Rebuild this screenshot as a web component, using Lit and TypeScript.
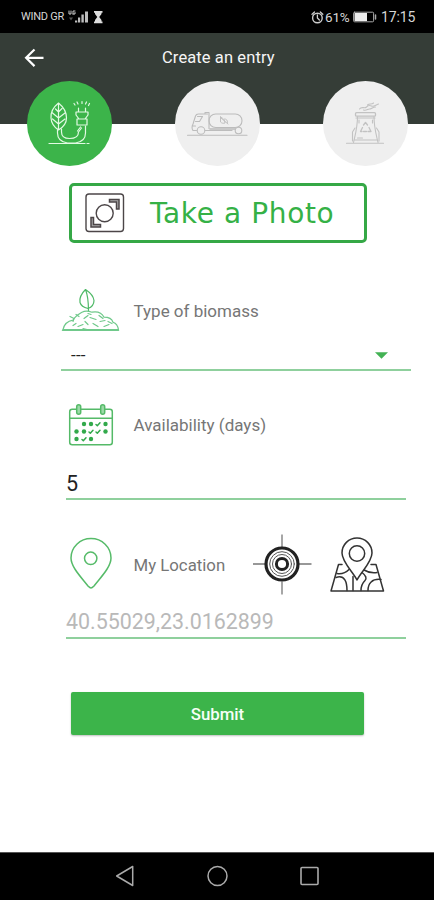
import { LitElement, html, css, svg } from "lit";
import { customElement } from "lit/decorators.js";

const dots = [
  [84, 424, 0], [91, 424, 0], [98, 424, 1], [105.5, 424, 0],
  [76.5, 431.5, 0], [84, 431.5, 0], [91, 431.5, 1], [98, 431.5, 1], [105.5, 431.5, 0],
  [76.5, 439, 0], [84, 439, 1], [91, 439, 0],
];

@customElement("app-root")
export class AppRoot extends LitElement {
  static styles = css`
    :host {
      display: flex;
      flex-direction: column;
      width: 434px;
      height: 900px;
      overflow: hidden;
      background: #fff;
      font-family: Roboto, sans-serif;
      --green: #3cb44a;
      --line: #8fd09d;
    }
    * { box-sizing: border-box; }
    svg { display: block; flex: none; fill: none; stroke-linecap: round; stroke-linejoin: round; }
    .status {
      height: 32.5px;
      flex: none;
      background: #000;
      color: #d6d6d6;
      display: flex;
      align-items: center;
      padding: 1px 19px 0 21px;
      font-size: 11px;
      letter-spacing: -0.25px;
    }
    .carrier { width: 45px; white-space: nowrap; }
    .spacer { flex: 1; }
    .battery-text { font-size: 13.5px; letter-spacing: -0.2px; width: 28px; }
    .clock { font-size: 14px; letter-spacing: -0.1px; width: 34px; margin-left: 4px; white-space: nowrap; }
    .bar {
      height: 91px;
      flex: none;
      background: #353d37;
      display: flex;
      align-items: flex-start;
      padding: 13.5px 0 0 23px;
      color: #f5f5f5;
    }
    .title {
      margin-left: 115px;
      line-height: 24px;
      font-size: 16.5px;
      white-space: nowrap;
      letter-spacing: 0.1px;
    }
    .steps {
      flex: none;
      display: flex;
      justify-content: space-between;
      margin-top: -42.5px;
      padding: 0 26px 0 26.5px;
    }
    .step {
      width: 85px;
      height: 85px;
      border-radius: 50%;
      background: #efefef;
      display: grid;
      place-items: center;
    }
    .step.active { background: var(--green); }
    .photo {
      flex: none;
      width: 298px;
      height: 60px;
      margin: 17px 0 0 69px;
      border: 3px solid #35a846;
      border-radius: 5px;
      display: flex;
      align-items: center;
      padding-left: 12.5px;
      font-family: "DejaVu Sans", Verdana, sans-serif;
      font-size: 28px;
      color: #35b146;
      background: #fff;
    }
    .photo-text { margin-left: 25.5px; white-space: nowrap; letter-spacing: 0.62px; line-height: 54px; padding-top: 2px; }
    .row { flex: none; display: flex; align-items: center; padding-left: 60px; }
    .type { height: 50px; margin-top: 43px; }
    .days { height: 50px; margin-top: 28.5px; }
    .place { height: 62px; margin-top: 33px; }
    .label { color: #767676; font-size: 17px; line-height: 24px; white-space: nowrap; margin-left: 13.5px; }
    .place .label { width: 113px; font-size: 16.8px; padding-top: 2px; }
    .map { margin-left: 5px; }
    .field { flex: none; border-bottom: 2px solid var(--line); display: flex; align-items: center; white-space: nowrap; }
    .select { margin: 0 0 0 61px; width: 350px; height: 35px; padding: 5px 23px 0 10px; justify-content: space-between; font-size: 17px; color: #222; }
    .dash { letter-spacing: 0.2px; }
    .number { margin: 0 0 0 66px; width: 340px; height: 50px; font-size: 21.5px; color: #222; padding-top: 20px; }
    .coords { margin: 0 0 0 66px; width: 340px; height: 44px; font-size: 21.4px; color: #b9b9b9; padding-top: 12px; }
    .submit {
      flex: none;
      width: 293px;
      height: 43.5px;
      margin: 53px 0 0 71px;
      border-radius: 2px;
      background: var(--green);
      color: #f6fff6;
      box-shadow: 0 1px 2px rgba(0, 0, 0, 0.25);
      display: grid;
      place-items: center;
      font-size: 16.8px;
      font-weight: 500;
      padding-top: 2px;
    }
    .nav {
      flex: none;
      margin-top: auto;
      height: 48.5px;
      background: #000;
      border-top: 1px solid #555;
      display: flex;
      align-items: center;
      justify-content: space-between;
      padding: 0 114px;
    }
  `;

  render() {
    return html`
      <div class="status">
        <span class="carrier">WIND GR</span>
        <svg width="38" height="16" viewBox="66 9 38 16">
          <path d="M69 11v3h2v-3M73 14v-3h2M73 14h2v-1.5" stroke="#ccc" stroke-width="1" />
          <path d="M69 17.5h4l-2 3z" fill="#555" />
          <path d="M75 22.5v-2h2.200v2zM78 22.500v-5h2.200v5zM81.400 22.500v-8h2.400v8zM85 22.500v-11h3v11z" fill="#bdbdbd" />
          <path d="M94 11.800h8.500M94 22.400h8.500" stroke="#ddd" stroke-width="1.700" stroke-linecap="butt" />
          <path d="M95 12h6.500v2l-2.300 3 2.300 3v2H95v-2l2.300-3L95 14z" fill="#ddd" />
        </svg>
        <span class="spacer"></span>
        <svg width="15" height="16" viewBox="309 8 15 16" stroke="#ccc">
          <circle cx="316.400" cy="17" r="4.800" stroke-width="1.400" />
          <path d="M311 13.200l2.500-2.200M321.800 13.200l-2.500-2.200M316.400 14v3l2 2" stroke-width="1.300" />
        </svg>
        <span class="battery-text">61%</span>
        <svg width="24" height="12" viewBox="354 11 24 12">
          <rect x="354.600" y="12.200" width="20" height="9.600" rx="1" stroke="#aaa" />
          <path d="M355.500 13h12.500v8h-12.500z" fill="#eee" />
          <path d="M376.500 15v4" stroke="#aaa" stroke-width="1.500" />
        </svg>
        <span class="clock">17:15</span>
      </div>

      <div class="bar">
        <svg width="24" height="24" viewBox="23 45 24 24">
          <path d="M43.500 56.800H26.500M34.500 48.500l-8.400 8.300 8.400 8.300" stroke="#fff" stroke-width="2.200" stroke-linecap="butt" stroke-linejoin="miter" />
        </svg>
        <span class="title">Create an entry</span>
      </div>

      <div class="steps">
        <div class="step active">
          <svg width="85" height="85" viewBox="26.500 81 85 85" stroke="#e2fae3" stroke-width="1.200">
            <path d="M58 103c-5 4-8 9-7.500 15 .3 5 3 9 7.500 12 5-3 8-7 8-12 0-6-3-11-8-15zM58 104v26M58 112l-3-3M58 112l3.500-3.500M58 118l-6-5M58 118l6.500-5M58 124l-6-5M58 124l6.500-5" />
            <path d="M57 130v3c0 5 3 9 10 10h8c7-1 10-5 10-10v-7M61 129v3c0 4 3 6.500 8 6.500 6 0 9-2.500 9-6.500l3-4" />
            <path d="M76.500 119h10v6h-10zM75.500 112h12v3l-3 4h-6l-3-4zM78 112v-4M85 112v-4M77 131l3-4" />
            <path d="M74.500 105l-1-1.500M77.500 104l-1-2M81.500 103.500v-2M85 104l1-2M88 105.500l1-2" />
            <path d="M48.500 143.500h36M86.500 143.500h2" />
          </svg>
        </div>
        <div class="step">
          <svg width="85" height="85" viewBox="175 81 85 85" stroke="#bcbcbc" stroke-width="1.100">
            <path d="M196.500 130.500h-3.500c-1-1-1.500-4 0-6.500l2.500-8c.5-1.500 1.500-2 3-2h9M200.500 130.500h31.500M205 114v-1.500h4v16M195.500 121.500h4l3-5h-5M192.500 126h3" />
            <rect x="209" y="114" width="33" height="13.500" rx="6.700" />
            <path d="M210 129h25" stroke-width="1.600" />
            <circle cx="201" cy="130.500" r="3.800" fill="#efefef" />
            <circle cx="238.500" cy="130.500" r="3.300" fill="#efefef" />
            <path d="M220.500 117v5c1.500 1.500 3 1.500 4.500 1 0-3-2-5-4.500-6zM221 118l7 6M224.500 119c2 0 3 1 3 3.500" stroke-width=".9" />
            <path d="M187.500 135.300h59.500" />
          </svg>
        </div>
        <div class="step">
          <svg width="85" height="85" viewBox="323.500 81 85 85" stroke="#c2c2c2" stroke-width="1.100">
            <rect x="356" y="112.700" width="20" height="3.500" rx="1" stroke-width="1.300" />
            <path d="M358 116.500c0 11-2 17-4 26M374.500 116.500c0 11 2 17 4 26M356.500 118h19M355.500 128l-2.500 4v9M377 128l2.500 4v9M355 140h23" />
            <path d="M362.500 131.500h-1.500l2-4M364 125l2-2.500 2 2.500M369.500 127.500l2 4h-3M367 131.500h-3" stroke-width="1.300" />
            <path d="M359.500 120v3M373 120v3M358 138h5" />
            <path d="M360 109c2-3 5 0 7-2s3-2 5-1 4-1 7-2M364 110c3 1 4-1 6-1s3-2 6-2M368 105c2-2 4 0 6-2" />
            <path d="M347 143.200h37" />
          </svg>
        </div>
      </div>

      <div class="photo">
        <svg width="40" height="40" viewBox="85 193 40 40" stroke="#4c4648">
          <rect x="86" y="194" width="37.500" height="37.500" rx="3" stroke-width="1.400" />
          <circle cx="104.700" cy="213.200" r="8.500" stroke-width="1.400" />
          <path d="M109.500 199.500h9.500v9.500h-2.500v-7h-7zM91 217.500v9.500h9.500v-2.500h-7v-7z" stroke-width="1.500" stroke-linejoin="miter" fill="#aaa" />
        </svg>
        <span class="photo-text">Take a Photo</span>
      </div>

      <div class="row type">
        <svg width="60" height="50" viewBox="60 285.500 60 50" stroke="#70c98b" stroke-width="1.200">
          <path d="M85.500 289c-4 4-6.500 8-5.500 13 1 3.500 4 5 8 6 4-1.500 6-4 6-8-.5-5-4-8-8.500-11zM85.500 289c2 5 3 10 3 21.500" stroke="#4fb967" />
          <path d="M63 329.200c1-5 4-8.500 10-9.500 2-4 5-5.500 9-8 4-2 7-1 10 0 6-1 10 1 12 5 5 0 8 2 9 5 3 1 5 4 5.500 7.500z" />
          <path d="M70 316l4 2-1 3M76 314l3 2M78 326l5-2M84 318l4-3M83 328l4 1M90 317l6 2M91 314l-3-1M93 323l5 3M99 315l4 3M100 321l5-1M104 326l5-2M88 324l-3-3M108 321l4 2M73 325l3-2" />
          <path d="M62.500 329.700h56" stroke-width="1.500" />
        </svg>
        <span class="label">Type of biomass</span>
      </div>
      <div class="field select">
        <span class="dash">---</span>
        <svg width="13" height="7" viewBox="0 0 13 7"><path d="M0 .3h13L6.500 6.800z" fill="#43b254" /></svg>
      </div>

      <div class="row days">
        <svg width="60" height="50" viewBox="60 400 60 50" stroke="#55ba68" stroke-width="1.500">
          <rect x="69.700" y="409.300" width="42.600" height="35.500" rx="2.500" />
          <path d="M70 418.200h42" />
          <rect x="76.700" y="404.700" width="4" height="9.500" rx="2" fill="#9cdaa8" />
          <rect x="100.700" y="404.700" width="4" height="9.500" rx="2" fill="#9cdaa8" />
          ${dots.map(([x, y, check]) =>
            check
              ? svg`<path d="M${x - 2} ${y + 0.5}l1.300 1.200 2.700-3" stroke="#32a94b" />`
              : svg`<circle cx=${x} cy=${y} r="2.200" fill="#32a94b" stroke="none" />`
          )}
        </svg>
        <span class="label">Availability (days)</span>
      </div>
      <div class="field number">5</div>

      <div class="row place">
        <svg width="60" height="62" viewBox="60 533 60 62" stroke="#56bb69" stroke-width="1.500">
          <path d="M91 588c-1.500 0-2-1-3-2-7-9-17-19-17-28a20 19.500 0 0 1 40 0c0 9-10 19-17 28-1 1-1.500 2-3 2z" />
          <circle cx="90.700" cy="558.300" r="6.200" />
        </svg>
        <span class="label">My Location</span>
        <svg width="70" height="62" viewBox="247 532.500 70 62" stroke="#222">
          <path d="M253 563.500h12M299 563.500h12.500M282 534v13M282 581v13" stroke="#777" stroke-width="1.300" stroke-linecap="butt" />
          <circle cx="282" cy="563.500" r="16" stroke-width="3.200" />
          <circle cx="282" cy="563.500" r="12.300" stroke="#555" stroke-width="1" />
          <circle cx="282" cy="563.500" r="9.500" stroke="#555" stroke-width="1" />
          <circle cx="282" cy="563.500" r="5.600" stroke-width="3" />
        </svg>
        <svg class="map" width="72" height="62" viewBox="322 532.500 72 62" stroke="#333" stroke-width="1.500">
          <path d="M342 564h-3.500l-7.500 26.500h52.500L376 564h-5" />
          <path d="M336 577c9-3 11 5 11 13M337 573c6 1 9-1 12-4M353 576v14M363 569c5 3 8 4 14 3M362 572c4 3 5 6 3 8-3 3-4 6-4 10M381 579c-9-1-13 4-13 11" />
          <path d="M357 579.500c-4-8-15-18-15-27a15 15 0 0 1 30 0c0 9-11 19-15 27z" fill="#fff" />
          <circle cx="357" cy="553" r="7.700" />
        </svg>
      </div>
      <div class="field coords">40.55029,23.0162899</div>

      <div class="submit">Submit</div>

      <div class="nav">
        <svg width="22" height="24" viewBox="114 864 22 24"><path d="M116.700 876l16-9.500v19z" stroke="#aaa" stroke-width="1.500" /></svg>
        <svg width="24" height="24" viewBox="205 864 24 24"><circle cx="217.500" cy="876" r="9.500" stroke="#aaa" stroke-width="1.500" /></svg>
        <svg width="22" height="24" viewBox="298 864 22 24"><rect x="301" y="867.500" width="17" height="17" rx="1" stroke="#aaa" stroke-width="1.600" /></svg>
      </div>
    `;
  }
}
